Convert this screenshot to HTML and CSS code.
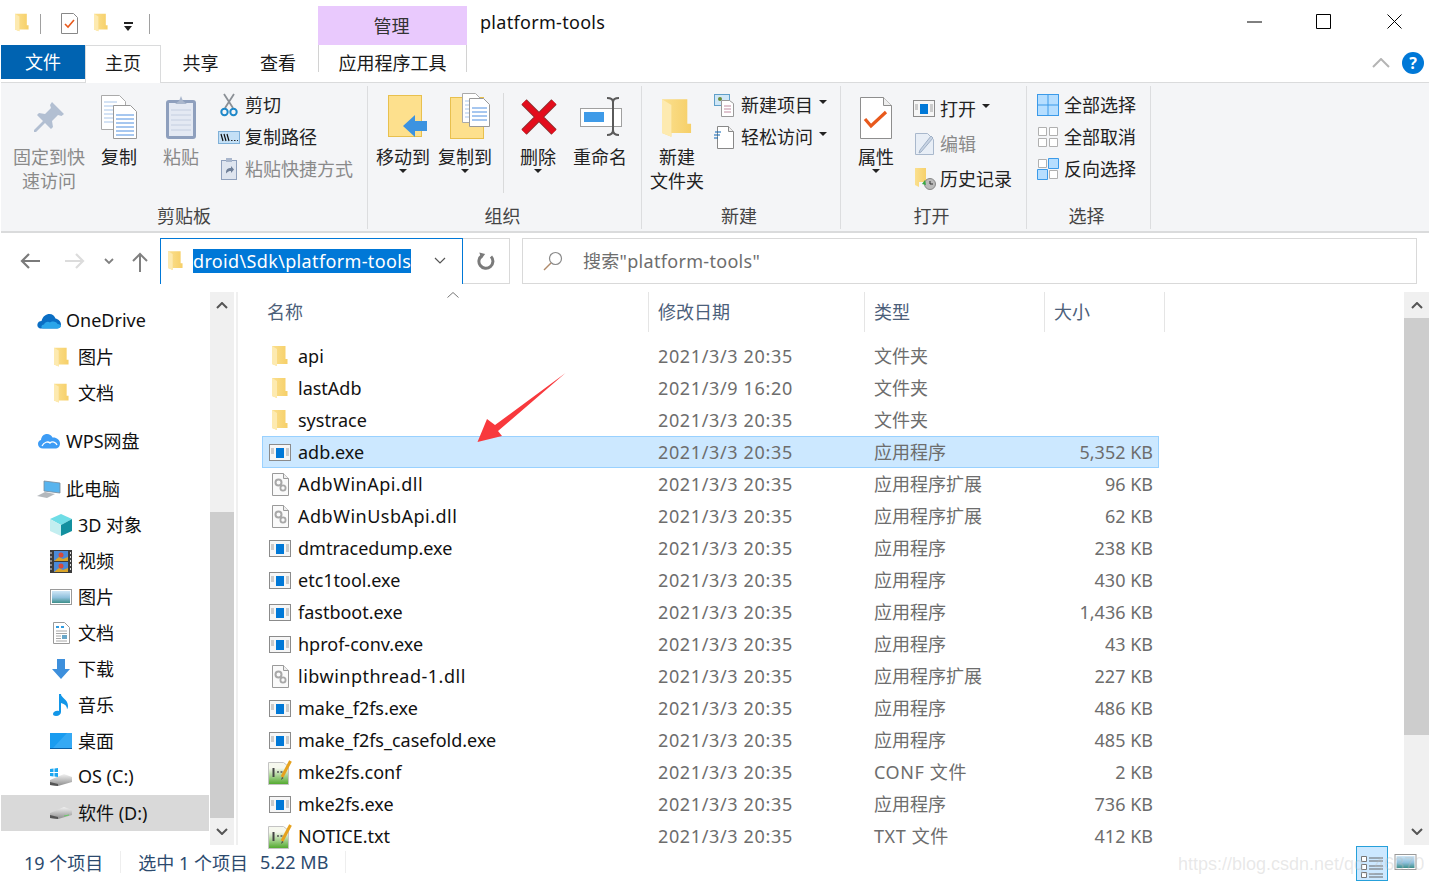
FILE: index.html
```html
<!DOCTYPE html>
<html lang="zh-CN">
<head>
  <meta charset="UTF-8">
  <title>platform-tools</title>
  <link rel="stylesheet" href="styles.css">
</head>
<body>
  <!-- shared icons -->
  <svg class="defs" aria-hidden="true">
    <defs>
      <linearGradient id="fg" x1="0" x2="1" y1="0" y2="0"><stop offset="0" stop-color="#fbe08f"/><stop offset="1" stop-color="#f6cf68"/></linearGradient>
      <linearGradient id="tg" x1="0" x2="0" y1="0" y2="1"><stop offset="0.25" stop-color="#f6f8ee"/><stop offset="1" stop-color="#4fa82a"/></linearGradient>
      <linearGradient id="dg" x1="0" x2="0" y1="0" y2="1"><stop offset="0" stop-color="#f2f2f2"/><stop offset="1" stop-color="#8d8d8d"/></linearGradient>
      <linearGradient id="sky" x1="0" x2="0" y1="0" y2="1"><stop offset="0" stop-color="#cfe6f6"/><stop offset="0.55" stop-color="#8fc0dc"/><stop offset="1" stop-color="#3d8f8a"/></linearGradient>
      <symbol id="folder" viewBox="0 0 16 20"><path d="M0 0h13.500v13h2v5H5v2l-5-2z" fill="url(#fg)"/><path d="M0 0l5 3v17l-5-2z" fill="#fdeab0"/></symbol>
      <symbol id="exe" viewBox="0 0 22 17"><rect x=".5" y=".5" width="21" height="16" fill="#f6f6f6" stroke="#8b8b8b"/><rect x="7" y="4" width="8" height="10" fill="#0078d7"/><path d="M2 5h3M2 7h3M2 9h3M17 5h3M17 7h3M17 9h3M17 11h3" stroke="#a0a0a0"/></symbol>
      <symbol id="dll" viewBox="0 0 17 23"><path d="M.5.5h11l5 5v17H.5z" fill="#fafafa" stroke="#9a9a9a"/><path d="M11.500.5v5h5" fill="#eee" stroke="#9a9a9a"/><circle cx="6.500" cy="9.500" r="3" fill="none" stroke="#a8a8a8" stroke-width="2"/><circle cx="11" cy="15" r="2.600" fill="none" stroke="#a8a8a8" stroke-width="1.800"/></symbol>
      <symbol id="txt" viewBox="0 0 24 25"><path d="M.5 2.500h15l5 4v18H.5z" fill="url(#tg)" stroke="#c4c4c4"/><path d="M5.500 8v9" stroke="#444" stroke-width="2"/><path d="M9 12h2M12.500 12h2" stroke="#555" stroke-width="1.500"/><path d="M22.500 1L14 17" stroke="#e6a21e" stroke-width="3"/><path d="M14 17l-1 3 2.500-2z" fill="#444"/></symbol>
      <symbol id="pin" viewBox="0 0 32 32"><path d="M19 1l12 12-2.500 2-3.500-1-6 6 1 6-2 2-6-6-9 9H1v-2l9-9-6-6 2-2 6 1 6-6-1-3z" fill="#b2bfd2"/></symbol>
      <symbol id="copy" viewBox="0 0 36 44"><path d="M.5.500h18l6 6v28H.5z" fill="#fff" stroke="#aaa"/><path d="M3 7h13M3 11h18M3 15h18M3 19h18M3 23h18M3 27h18" stroke="#a9c6ea"/><path d="M12.500 10.500h17l6 6v27h-23z" fill="#fff" stroke="#999"/><path d="M15 20h18M15 24h18M15 28h18M15 32h18M15 36h18M15 40h18" stroke="#4f8fe0"/></symbol>
      <symbol id="paste" viewBox="0 0 32 44"><rect x="1" y="5" width="30" height="39" rx="3" fill="#8e9fbd"/><rect x="4" y="8" width="24" height="33" fill="#e4e9f3"/><path d="M6 15h20M6 20h20M6 25h20M6 30h20M6 35h20" stroke="#c4cee0"/><path d="M10 9l4-3 2-5 2 5 4 3z" fill="#aab7cd"/></symbol>
      <symbol id="scissors" viewBox="0 0 18 24"><path d="M4 1l9 14M14 1L5 15" stroke="#8b9096" stroke-width="1.800" fill="none"/><circle cx="4.500" cy="19" r="3.200" fill="none" stroke="#1e88c9" stroke-width="2"/><circle cx="13.500" cy="19" r="3.200" fill="none" stroke="#1e88c9" stroke-width="2"/></symbol>
      <symbol id="path" viewBox="0 0 22 13"><rect x=".5" y=".5" width="21" height="12" fill="#c4e0f6" stroke="#7fb0d8"/><path d="M3 3l2 7M6 3l2 7M9 3l2 7" stroke="#111" stroke-width="1.200"/><path d="M13 9.500h1.500M16 9.500h1.500M19 9.500h1" stroke="#222"/></symbol>
      <symbol id="shortcut" viewBox="0 0 16 22"><rect x=".5" y="2.500" width="15" height="19" fill="#dfe5ef" stroke="#8fa0bc"/><rect x="5" y="0" width="6" height="4" fill="#a9b6cc"/><path d="M5 15c0-4 2-5 5-5V8l3 3.500-3 3.500v-2c-2 0-3 .500-5 2.500z" fill="#6f7f98"/></symbol>
      <symbol id="move" viewBox="0 0 40 44"><rect x=".5" y=".5" width="33" height="41" fill="#fde08d" stroke="#e8c04e"/><path d="M15 31l12-11v6h12v10H27v6z" fill="#3c93e0"/></symbol>
      <symbol id="copyto" viewBox="0 0 40 46"><rect x=".5" y="4.500" width="33" height="41" fill="#fde08d" stroke="#e8c04e"/><path d="M12.500.5h13l5 5v24h-18z" fill="#fff" stroke="#aaa"/><path d="M15 8h13M15 12h13M15 16h13M15 20h13M15 24h13" stroke="#a9c6ea"/><path d="M19.500 5.500h14l6 6v22h-20z" fill="#fff" stroke="#999"/><path d="M22 15h15M22 19h15M22 23h15M22 27h15" stroke="#4f8fe0"/></symbol>
      <symbol id="del" viewBox="0 0 38 38"><path d="M4 4l30 30M34 4L4 34" stroke="#8a3030" stroke-width="7.500"/><path d="M4 4l30 30M34 4L4 34" stroke="#e30d1c" stroke-width="6"/></symbol>
      <symbol id="rename" viewBox="0 0 42 39"><rect x=".5" y="11.500" width="41" height="18" fill="#fff" stroke="#a0a0a0"/><rect x="4" y="15" width="20" height="10" fill="#3f9be8"/><path d="M27 1c4 0 6 1 6 4v28c0 3-2 5-6 5M39 1c-4 0-6 1-6 4v28c0 3 2 5 6 5" fill="none" stroke="#5a5a5a" stroke-width="2"/></symbol>
      <symbol id="newitem" viewBox="0 0 22 23"><rect x=".5" y=".5" width="15" height="11" fill="#cfe6f6" stroke="#5f9fc9"/><circle cx="6" cy="5" r="2" fill="#6b8e3a"/><path d="M7.500 6.500h8l4 3v13h-12z" fill="#fff" stroke="#999"/><path d="M10 12h7M10 15h7M10 18h7" stroke="#c08aa0"/></symbol>
      <symbol id="easy" viewBox="0 0 20 23"><path d="M3.500 .5h11l5 5v17h-16z" fill="#fff" stroke="#888"/><path d="M14.500.5v5h5" fill="#eee" stroke="#888"/><path d="M1 6h6M0 9h6M0 12h4" stroke="#0a64b4" stroke-width="1.200"/></symbol>
      <symbol id="props" viewBox="0 0 32 42"><path d="M.5.500h23l8 8v33H.5z" fill="#fff" stroke="#8e8e8e"/><path d="M23.500.5v8h8" fill="#eee" stroke="#8e8e8e"/><path d="M5 22l6 7L26 15" fill="none" stroke="#e8591c" stroke-width="3.200"/></symbol>
      <symbol id="edit" viewBox="0 0 20 22"><path d="M.5.500h12l6 6v15H.5z" fill="#e8eef6" stroke="#a9b8cc"/><path d="M18 5L6 19l-2 1 1-3L16 3z" fill="#c8d4e4" stroke="#9fb0c6"/></symbol>
      <symbol id="history" viewBox="0 0 22 22"><path d="M0 0h11v11h1v3H4v5l-4-2z" fill="url(#fg)"/><circle cx="15" cy="16" r="5.500" fill="#bbb" stroke="#888"/><path d="M15 13v3h3" stroke="#333" fill="none"/><path d="M11 17l-4-1 3-4z" fill="#39a845"/></symbol>
      <symbol id="selall" viewBox="0 0 22 22"><rect x=".5" y=".5" width="21" height="21" fill="#b6deff" stroke="#3b9ae9"/><path d="M11 0v22M0 11h22" stroke="#3b9ae9"/></symbol>
      <symbol id="selnone" viewBox="0 0 22 22"><path d="M1.500 1.500h8v8h-8zM12.500 1.500h8v8h-8zM1.500 12.500h8v8h-8zM12.500 12.500h8v8h-8z" fill="#fff" stroke="#b0b0b0"/></symbol>
      <symbol id="selinv" viewBox="0 0 22 22"><path d="M1.500 1.500h8v8h-8zM12.500 12.500h8v8h-8z" fill="#fff" stroke="#b0b0b0"/><path d="M11.500.5h10v10h-10zM.5 11.500h10v10H.5z" fill="#b6deff" stroke="#3b9ae9"/></symbol>
      <symbol id="onedrive" viewBox="0 0 24 16"><path d="M4 15.500C1 15.500 0 13 .5 11c.5-2 2-3 4-3C6 3 9 1 12.500 1c3 0 5 2 6 4.500C21 6 24 8 24 11.500c0 2.500-2 4-4 4z" fill="#0a6ec4"/><path d="M6 15.500c-2 0-2.500-3.500 1-4 1-2.500 4-3.500 6-2 2-2 7-1 7.500 1.500 2 0 3.500 1 3.500 2 0 1.500-2 2.500-4 2.500z" fill="#2aa5ea"/></symbol>
      <symbol id="wps" viewBox="0 0 22 16"><path d="M5 15.500C2 15.500 0 13.500 0 11c0-2 1-3.500 3-4C3.500 3 6 1 9 1c2.500 0 4.500 1.500 5.500 3.500 3.500-.5 7.500 2 7.500 6 0 3-2 5-5 5z" fill="#3d9cf5"/><path d="M4 13c2-4 6-5 8-3 2-2 6-1 7 2" fill="none" stroke="#fff" stroke-width="1.300"/></symbol>
      <symbol id="pc" viewBox="0 0 24 18"><path d="M7 1l16 2v10L7 11z" fill="#58b4ee" stroke="#7a8a99" stroke-width=".8"/><path d="M0 16l8-4 10 2-8 4z" fill="#b4b8bc"/></symbol>
      <symbol id="cube" viewBox="0 0 22 22"><path d="M11 0l11 5-11 6L0 5z" fill="#6fdde6"/><path d="M0 5l11 6v11L0 17z" fill="#c3eef0"/><path d="M22 5l-11 6v11l11-5z" fill="#12909f"/></symbol>
      <symbol id="video" viewBox="0 0 22 23"><rect width="22" height="23" fill="#3c3c3c"/><rect x="4" y="1" width="14" height="10" fill="#4a8ad8"/><rect x="4" y="12" width="14" height="10" fill="#4a8ad8"/><path d="M4 11l5-4 4 2 5-2v4zM4 22l5-4 4 2 5-2v4z" fill="#d9a428"/><circle cx="11" cy="5" r="2.500" fill="#d84a3a"/><circle cx="11" cy="16" r="2.500" fill="#d84a3a"/><path d="M1 2v19M20.500 2v19" stroke="#ddd" stroke-dasharray="2 2"/></symbol>
      <symbol id="picture" viewBox="0 0 22 16"><rect x=".5" y=".5" width="21" height="15" fill="#fff" stroke="#9a9a9a"/><rect x="2" y="2" width="18" height="12" fill="url(#sky)"/></symbol>
      <symbol id="doc" viewBox="0 0 17 22"><path d="M.5.500h11l5 5v16H.5z" fill="#fff" stroke="#9a9a9a"/><path d="M3 5h3M8 5h3" stroke="#2f9be0" stroke-width="2"/><path d="M3 9h11M3 11.500h11M3 14h5M3 16.500h5M3 19h11" stroke="#a8a8a8"/><rect x="9" y="13" width="5" height="4" fill="#6aa7c8"/></symbol>
      <symbol id="down" viewBox="0 0 18 20"><path d="M5 0h8v10h5l-9 10-9-10h5z" fill="#3d8fdc"/></symbol>
      <symbol id="music" viewBox="0 0 16 22"><path d="M6 0h2c0 4 7 5 7 12 0 1-.5 3-1 3 0-3-2-5-6-6v9c0 2-2 4-5 4-2 0-3-1-3-2 0-2 3-4 6-3z" fill="#1296e8"/></symbol>
      <symbol id="desktop" viewBox="0 0 22 16"><rect width="22" height="16" fill="#1a9cf0"/><path d="M3 15L17 0h5v15z" fill="#35a9f4"/><path d="M0 15h22v1H0z" fill="#0b5fa5"/></symbol>
      <symbol id="drive" viewBox="0 0 22 12"><path d="M0 6l14-6 8 3v5L8 12 0 11z" fill="url(#dg)"/><path d="M0 8l8 2v2L0 11z" fill="#555"/><path d="M14 9l5-1" stroke="#6c6"/></symbol>
      <symbol id="osdrive" viewBox="0 0 22 18"><path d="M0 12l14-6 8 3v5L8 18l-8-1z" fill="url(#dg)"/><path d="M0 14l8 2v2l-8-1z" fill="#555"/><path d="M0 1l3.500-.5V4H0zM4.500 .4L8 0v4H4.500zM0 5h3.500v3.500L0 8zM4.500 5H8v4l-3.500-.5z" fill="#1ea7f0"/></symbol>
      <symbol id="details" viewBox="0 0 22 24"><path d="M.5 1.500h5v5h-5zM.5 9.500h5v5h-5zM.5 17.500h5v5h-5z" fill="#fff" stroke="#777"/><path d="M8 3h14M8 6h14M8 11h14M8 14h14M8 19h14M8 22h14" stroke="#666"/></symbol>
    </defs>
  </svg>

  <div class="title-bar">
    <svg class="qa-folder"><use href="#folder"/></svg>
    <span class="qa-sep"></span>
    <svg class="qa-check" viewBox="0 0 17 21"><path d="M.5 .5h12l4 4v16H.5z" fill="#fff" stroke="#888"/><path d="M4 11l3 3 6-7" fill="none" stroke="#e8591c" stroke-width="1.600"/></svg>
    <svg class="qa-folder qa-folder2"><use href="#folder"/></svg>
    <span class="qa-drop"></span>
    <span class="qa-sep qa-sep2"></span>
    <div class="manage">管理</div>
    <div class="title">platform-tools</div>
    <div class="win-btns">
      <svg viewBox="0 0 16 16"><path d="M0 8h15" stroke="#000"/></svg>
      <svg viewBox="0 0 16 16"><path d="M.5 .5h14v14H.5z" fill="none" stroke="#000"/></svg>
      <svg viewBox="0 0 16 16"><path d="M.5 .5l14 14M14.500 .5l-14 14" stroke="#000"/></svg>
    </div>
  </div>

  <div class="tabs">
    <div class="tab tab-file">文件</div>
    <div class="tab tab-home">主页</div>
    <div class="tab tab-share">共享</div>
    <div class="tab tab-view">查看</div>
    <div class="tab tab-app">应用程序工具</div>
    <svg class="collapse" viewBox="0 0 18 10"><path d="M1 9l8-8 8 8" fill="none" stroke="#b4b4b4" stroke-width="2"/></svg>
    <div class="help">?</div>
  </div>

  <div class="ribbon">
    <div class="group g-clip">
      <div class="group-body">
        <div class="big w72 off"><span class="big-icon"><svg class="ic-pin"><use href="#pin"/></svg></span>固定到快<br>速访问</div>
        <div class="big w68"><span class="big-icon"><svg class="ic-copy"><use href="#copy"/></svg></span>复制</div>
        <div class="big w56 off"><span class="big-icon"><svg class="ic-paste"><use href="#paste"/></svg></span>粘贴</div>
        <div class="small-col">
          <div class="small"><span class="small-icon"><svg class="ic-scissors"><use href="#scissors"/></svg></span>剪切</div>
          <div class="small"><span class="small-icon"><svg class="ic-path"><use href="#path"/></svg></span>复制路径</div>
          <div class="small off"><span class="small-icon"><svg class="ic-shortcut"><use href="#shortcut"/></svg></span>粘贴快捷方式</div>
        </div>
      </div>
      <div class="group-label">剪贴板</div>
    </div>

    <div class="group g-org">
      <div class="group-body">
        <div class="big w62"><span class="big-icon"><svg class="ic-move"><use href="#move"/></svg></span>移动到<i class="drop"></i></div>
        <div class="big w62"><span class="big-icon"><svg class="ic-copyto"><use href="#copyto"/></svg></span>复制到<i class="drop"></i></div>
        <span class="inner-sep"></span>
        <div class="big w60"><span class="big-icon"><svg class="ic-del"><use href="#del"/></svg></span>删除<i class="drop"></i></div>
        <div class="big w64"><span class="big-icon"><svg class="ic-rename"><use href="#rename"/></svg></span>重命名</div>
      </div>
      <div class="group-label">组织</div>
    </div>

    <div class="group g-new">
      <div class="group-body">
        <div class="big w58"><span class="big-icon"><svg class="ic-bigfolder"><use href="#folder"/></svg></span>新建<br>文件夹</div>
        <div class="small-col">
          <div class="small"><span class="small-icon"><svg class="ic-newitem"><use href="#newitem"/></svg></span>新建项目<i class="drop-r"></i></div>
          <div class="small"><span class="small-icon"><svg class="ic-easy"><use href="#easy"/></svg></span>轻松访问<i class="drop-r"></i></div>
        </div>
      </div>
      <div class="group-label">新建</div>
    </div>

    <div class="group g-open">
      <div class="group-body">
        <div class="big w58"><span class="big-icon"><svg class="ic-props"><use href="#props"/></svg></span>属性<i class="drop"></i></div>
        <div class="small-col tall">
          <div class="small"><span class="small-icon"><svg class="ic-exe"><use href="#exe"/></svg></span>打开<i class="drop-r"></i></div>
          <div class="small off"><span class="small-icon"><svg class="ic-edit"><use href="#edit"/></svg></span>编辑</div>
          <div class="small"><span class="small-icon"><svg class="ic-history"><use href="#history"/></svg></span>历史记录</div>
        </div>
      </div>
      <div class="group-label">打开</div>
    </div>

    <div class="group g-sel">
      <div class="group-body">
        <div class="small-col">
          <div class="small"><span class="small-icon"><svg class="ic-sel"><use href="#selall"/></svg></span>全部选择</div>
          <div class="small"><span class="small-icon"><svg class="ic-sel"><use href="#selnone"/></svg></span>全部取消</div>
          <div class="small"><span class="small-icon"><svg class="ic-sel"><use href="#selinv"/></svg></span>反向选择</div>
        </div>
      </div>
      <div class="group-label">选择</div>
    </div>
  </div>

  <div class="nav">
    <svg class="nav-arrow" viewBox="0 0 20 18"><path d="M20 9H2M9 2L2 9l7 7" fill="none" stroke="#7a7a7a" stroke-width="2.200"/></svg>
    <svg class="nav-arrow nav-fwd" viewBox="0 0 20 18"><path d="M0 9h18M11 2l7 7-7 7" fill="none" stroke="#dcdcdc" stroke-width="2.200"/></svg>
    <svg class="nav-hist" viewBox="0 0 10 7"><path d="M1 1l4 4 4-4" fill="none" stroke="#808080" stroke-width="1.800"/></svg>
    <svg class="nav-up" viewBox="0 0 18 20"><path d="M9 20V2M2 9l7-7 7 7" fill="none" stroke="#808080" stroke-width="2"/></svg>
    <div class="address">
      <svg class="addr-folder"><use href="#folder"/></svg>
      <span class="addr-text">droid\Sdk\platform-tools</span>
      <svg class="addr-chev" viewBox="0 0 12 7"><path d="M1 1l5 5 5-5" fill="none" stroke="#555" stroke-width="1.200"/></svg>
    </div>
    <div class="refresh">
      <svg viewBox="0 0 18 18"><path d="M5 3.500a7 7 0 1 0 9 1" fill="none" stroke="#7a7a7a" stroke-width="3"/><path d="M2 1l6 .500L5 7z" fill="#7a7a7a" transform="rotate(8 5 3)"/></svg>
    </div>
    <div class="search">
      <svg viewBox="0 0 20 20"><circle cx="12.500" cy="7.500" r="6" fill="none" stroke="#8a8a8a" stroke-width="1.200"/><path d="M8 12l-7 7" stroke="#b08a6a" stroke-width="1.400"/></svg>
      <span>搜索"platform-tools"</span>
    </div>
  </div>

  <div class="content">
    <div class="sidebar">
      <div class="side-item lvl1"><span class="side-icon"><svg class="s-24-16"><use href="#onedrive"/></svg></span>OneDrive</div>
      <div class="side-item lvl2"><span class="side-icon"><svg class="s-folder"><use href="#folder"/></svg></span>图片</div>
      <div class="side-item lvl2"><span class="side-icon"><svg class="s-folder"><use href="#folder"/></svg></span>文档</div>
      <div class="side-item lvl1 sec"><span class="side-icon"><svg class="s-22-16"><use href="#wps"/></svg></span>WPS网盘</div>
      <div class="side-item lvl1 sec"><span class="side-icon"><svg class="s-24-18"><use href="#pc"/></svg></span>此电脑</div>
      <div class="side-item lvl2"><span class="side-icon"><svg class="s-22-22"><use href="#cube"/></svg></span>3D 对象</div>
      <div class="side-item lvl2"><span class="side-icon"><svg class="s-22-23"><use href="#video"/></svg></span>视频</div>
      <div class="side-item lvl2"><span class="side-icon"><svg class="s-22-16"><use href="#picture"/></svg></span>图片</div>
      <div class="side-item lvl2"><span class="side-icon"><svg class="s-17-22"><use href="#doc"/></svg></span>文档</div>
      <div class="side-item lvl2"><span class="side-icon"><svg class="s-18-20"><use href="#down"/></svg></span>下载</div>
      <div class="side-item lvl2"><span class="side-icon"><svg class="s-16-22"><use href="#music"/></svg></span>音乐</div>
      <div class="side-item lvl2"><span class="side-icon"><svg class="s-22-16"><use href="#desktop"/></svg></span>桌面</div>
      <div class="side-item lvl2"><span class="side-icon"><svg class="s-22-18"><use href="#osdrive"/></svg></span>OS (C:)</div>
      <div class="side-item lvl2 current"><span class="side-icon"><svg class="s-22-12"><use href="#drive"/></svg></span>软件 (D:)</div>
    </div>
    <div class="scroll scroll-side">
      <svg class="sb-arrow" viewBox="0 0 12 7"><path d="M1 6l5-5 5 5" fill="none" stroke="#555" stroke-width="2"/></svg>
      <div class="sb-space sb-top-side"></div>
      <div class="sb-thumb sb-thumb-side"></div>
      <svg class="sb-arrow" viewBox="0 0 12 7"><path d="M1 1l5 5 5-5" fill="none" stroke="#555" stroke-width="2"/></svg>
    </div>

    <div class="files">
      <div class="list-head">
        <div class="hcell hname">名称</div>
        <div class="hcell">修改日期</div>
        <div class="hcell">类型</div>
        <div class="hcell">大小</div>
        <svg class="sort-arrow" viewBox="0 0 12 6"><path d="M.5 5.500L6 .5l5.500 5" fill="none" stroke="#777"/></svg>
      </div>
      <div class="rows">
        <div class="row"><div class="name"><span class="file-icon"><svg class="f-folder"><use href="#folder"/></svg></span>api</div><div class="cell date">2021/3/3 20:35</div><div class="cell">文件夹</div><div class="size"></div></div>
        <div class="row"><div class="name"><span class="file-icon"><svg class="f-folder"><use href="#folder"/></svg></span>lastAdb</div><div class="cell date">2021/3/9 16:20</div><div class="cell">文件夹</div><div class="size"></div></div>
        <div class="row"><div class="name"><span class="file-icon"><svg class="f-folder"><use href="#folder"/></svg></span>systrace</div><div class="cell date">2021/3/3 20:35</div><div class="cell">文件夹</div><div class="size"></div></div>
        <div class="row selected"><div class="name"><span class="file-icon"><svg class="f-exe"><use href="#exe"/></svg></span>adb.exe</div><div class="cell date">2021/3/3 20:35</div><div class="cell">应用程序</div><div class="size">5,352 KB</div></div>
        <div class="row"><div class="name dll-name"><span class="file-icon"><svg class="f-dll"><use href="#dll"/></svg></span>AdbWinApi.dll</div><div class="cell date">2021/3/3 20:35</div><div class="cell">应用程序扩展</div><div class="size">96 KB</div></div>
        <div class="row"><div class="name dll-name"><span class="file-icon"><svg class="f-dll"><use href="#dll"/></svg></span>AdbWinUsbApi.dll</div><div class="cell date">2021/3/3 20:35</div><div class="cell">应用程序扩展</div><div class="size">62 KB</div></div>
        <div class="row"><div class="name"><span class="file-icon"><svg class="f-exe"><use href="#exe"/></svg></span>dmtracedump.exe</div><div class="cell date">2021/3/3 20:35</div><div class="cell">应用程序</div><div class="size">238 KB</div></div>
        <div class="row"><div class="name"><span class="file-icon"><svg class="f-exe"><use href="#exe"/></svg></span>etc1tool.exe</div><div class="cell date">2021/3/3 20:35</div><div class="cell">应用程序</div><div class="size">430 KB</div></div>
        <div class="row"><div class="name"><span class="file-icon"><svg class="f-exe"><use href="#exe"/></svg></span>fastboot.exe</div><div class="cell date">2021/3/3 20:35</div><div class="cell">应用程序</div><div class="size">1,436 KB</div></div>
        <div class="row"><div class="name"><span class="file-icon"><svg class="f-exe"><use href="#exe"/></svg></span>hprof-conv.exe</div><div class="cell date">2021/3/3 20:35</div><div class="cell">应用程序</div><div class="size">43 KB</div></div>
        <div class="row"><div class="name dll-name"><span class="file-icon"><svg class="f-dll"><use href="#dll"/></svg></span>libwinpthread-1.dll</div><div class="cell date">2021/3/3 20:35</div><div class="cell">应用程序扩展</div><div class="size">227 KB</div></div>
        <div class="row"><div class="name"><span class="file-icon"><svg class="f-exe"><use href="#exe"/></svg></span>make_f2fs.exe</div><div class="cell date">2021/3/3 20:35</div><div class="cell">应用程序</div><div class="size">486 KB</div></div>
        <div class="row"><div class="name"><span class="file-icon"><svg class="f-exe"><use href="#exe"/></svg></span>make_f2fs_casefold.exe</div><div class="cell date">2021/3/3 20:35</div><div class="cell">应用程序</div><div class="size">485 KB</div></div>
        <div class="row"><div class="name"><span class="file-icon"><svg class="f-txt"><use href="#txt"/></svg></span>mke2fs.conf</div><div class="cell date">2021/3/3 20:35</div><div class="cell mixed">CONF 文件</div><div class="size">2 KB</div></div>
        <div class="row"><div class="name"><span class="file-icon"><svg class="f-exe"><use href="#exe"/></svg></span>mke2fs.exe</div><div class="cell date">2021/3/3 20:35</div><div class="cell">应用程序</div><div class="size">736 KB</div></div>
        <div class="row"><div class="name"><span class="file-icon"><svg class="f-txt"><use href="#txt"/></svg></span>NOTICE.txt</div><div class="cell date">2021/3/3 20:35</div><div class="cell mixed">TXT 文件</div><div class="size">412 KB</div></div>
      </div>
    </div>

    <div class="scroll scroll-main">
      <svg class="sb-arrow" viewBox="0 0 12 7"><path d="M1 6l5-5 5 5" fill="none" stroke="#555" stroke-width="2"/></svg>
      <div class="sb-thumb sb-thumb-main"></div>
      <div class="sb-space"></div>
      <svg class="sb-arrow" viewBox="0 0 12 7"><path d="M1 1l5 5 5-5" fill="none" stroke="#555" stroke-width="2"/></svg>
    </div>
  </div>

  <div class="status">
    <span class="st-count">19 个项目</span>
    <span class="st-sep"></span>
    <span class="st-sel">选中 1 个项目</span>
    <span class="st-size">5.22 MB</span>
    <span class="st-sep"></span>
    <div class="views">
      <div class="view-btn active"><svg class="v-details"><use href="#details"/></svg></div>
      <div class="view-btn"><svg class="v-thumb"><use href="#picture"/></svg></div>
    </div>
  </div>

  <!-- annotation added on top of the screenshot -->
  <svg class="red-arrow" viewBox="0 0 90 72"><path d="M88.500 1L18 53l-8-6L.5 70 25 64l-4-5z" fill="#f8393d"/></svg>
  <div class="watermark">https://blog.csdn.net/qq_46370</div>
</body>
</html>
```

FILE: styles.css
```css
* {
  box-sizing: border-box;
}
html, body {
  height: 100%;
}
body {
  margin: 0;
  padding: 0 1px;
  background: #fff;
  color: #1a1a1a;
  font-family: 'Noto Sans', 'Noto Sans CJK SC', sans-serif;
  font-size: 18px;
  overflow: hidden;
  position: relative;
}
svg {
  display: block;
  flex: none;
}
.defs {
  position: absolute;
  width: 0;
  height: 0;
}

/* title bar */
.title-bar {
  height: 45px;
  display: flex;
  align-items: flex-start;
}
.qa-folder {
  width: 14px;
  height: 21px;
  margin: 12px 0 0 14px;
}
.qa-folder2 {
  margin-left: 16px;
}
.qa-sep {
  width: 1px;
  height: 20px;
  margin: 14px 0 0 11px;
  background: #a0a0a0;
}
.qa-sep2 {
  margin-left: 16px;
}
.qa-check {
  width: 17px;
  height: 21px;
  margin: 13px 0 0 20px;
}
.qa-drop {
  width: 9px;
  height: 8px;
  margin: 22px 0 0 16px;
  border-top: 2px solid #222;
  position: relative;
}
.qa-drop::after {
  content: "";
  position: absolute;
  left: 0;
  top: 2px;
  border: 4.5px solid transparent;
  border-top: 5px solid #222;
  border-bottom: 0;
}
.manage {
  width: 149px;
  height: 39px;
  margin: 6px 0 0 168px;
  padding-right: 2px;
  background: #e9c9fd;
  text-align: center;
  line-height: 41px;
  color: #333;
}
.title {
  margin: 6px 0 0 13px;
  line-height: 33px;
  color: #111;
  letter-spacing: 0.3px;
}
.win-btns {
  margin-left: auto;
  margin-right: 26px;
  display: flex;
  gap: 53px;
  padding-top: 14px;
}
.win-btns svg {
  width: 16px;
  height: 16px;
}
.win-btns svg:last-child {
  margin-left: 2px;
}

/* tabs */
.tabs {
  height: 38px;
  display: flex;
  align-items: flex-start;
  border-bottom: 1px solid #dadbdc;
  position: relative;
}
.tab {
  height: 37px;
  text-align: center;
  line-height: 37px;
}
.tab-file {
  width: 84px;
  height: 34px;
  line-height: 34px;
  background: #0063b1;
  color: #fff;
}
.tab-home {
  width: 76px;
  height: 38px;
  line-height: 35px;
  background: #fff;
  border: 1px solid #dadbdc;
  border-bottom: 0;
  position: relative;
  z-index: 1;
}
.tab-share {
  width: 79px;
}
.tab-view {
  width: 76px;
}
.tab-app {
  width: 149px;
  height: 27px;
  margin-left: 2px;
  line-height: 37px;
  overflow: visible;
  border-left: 1px solid #d2d2d2;
  border-right: 1px solid #d2d2d2;
}
.collapse {
  width: 18px;
  height: 10px;
  margin: 13px 0 0 905px;
}
.help {
  width: 22px;
  height: 22px;
  margin: 7px 0 0 12px;
  border-radius: 50%;
  background: #0078d7;
  color: #fff;
  font-size: 16px;
  font-weight: 700;
  line-height: 22px;
  text-align: center;
}

/* ribbon */
.ribbon {
  height: 150px;
  display: flex;
  background: #f4f5f7;
  border-bottom: 2px solid #dadbdc;
  padding-top: 3px;
  color: #222;
}
.group {
  height: 143px;
  display: flex;
  flex-direction: column;
  border-right: 1px solid #dcdddf;
}
.g-clip {
  width: 367px;
}
.g-clip .group-body {
  padding-left: 12px;
}
.g-org {
  width: 274px;
}
.g-org .group-body {
  padding-left: 4px;
}
.g-new {
  width: 199px;
}
.g-new .group-body {
  padding-left: 6px;
}
.g-open {
  width: 186px;
}
.g-open .group-body {
  padding-left: 6px;
}
.g-sel {
  width: 124px;
}
.g-sel .group-body {
  padding-left: 10px;
}
.group-body {
  flex: 1;
  display: flex;
  min-height: 0;
}
.group-label {
  line-height: 24px;
  margin-bottom: 1px;
  padding-right: 4px;
  text-align: center;
  color: #444;
}
.g-clip .group-label {
  padding-right: 0;
}
.big {
  padding-top: 7px;
  line-height: 24px;
  text-align: center;
  white-space: nowrap;
  position: relative;
}
.big-icon {
  height: 52px;
  padding-bottom: 6px;
  display: flex;
  justify-content: center;
  align-items: flex-end;
}
.w72 { width: 72px; }
.w68 { width: 68px; }
.w64 { width: 64px; }
.w62 { width: 62px; }
.w60 { width: 60px; }
.w58 { width: 58px; }
.w56 { width: 56px; }
.off {
  color: #8a8a8a;
}
.drop {
  position: absolute;
  left: 50%;
  top: 83px;
  margin-left: -4px;
  border: 4px solid transparent;
  border-top: 4px solid #222;
  border-bottom: 0;
}
.drop-r {
  display: inline-block;
  margin: 0 0 4px 6px;
  border: 4px solid transparent;
  border-top: 4px solid #222;
  border-bottom: 0;
}
.inner-sep {
  width: 1px;
  height: 100px;
  margin: 7px 4px 0 7px;
  background: #d9dadb;
}
.small-col {
  margin: 3px 0 0 9px;
}
.g-new .small-col,
.g-open .small-col {
  margin-left: 8px;
}
.g-sel .small-col {
  margin-left: 0;
}
.small {
  height: 32px;
  padding-bottom: 2px;
  display: flex;
  align-items: center;
  white-space: nowrap;
}
.tall {
  margin-top: 5px;
}
.tall .small {
  height: 35px;
}
.small-icon {
  width: 27px;
  margin-top: 2px;
  display: flex;
  justify-content: flex-start;
}

/* ribbon icon sizes */
.ic-pin { width: 32px; height: 32px; margin-bottom: 6px; }
.ic-copy { width: 36px; height: 44px; }
.ic-paste { width: 32px; height: 44px; }
.ic-scissors { width: 18px; height: 24px; margin-left: 2px; }
.ic-path { width: 22px; height: 13px; }
.ic-shortcut { width: 16px; height: 22px; margin-left: 3px; }
.ic-move { width: 40px; height: 44px; margin-left: 10px; }
.ic-copyto { width: 40px; height: 46px; margin-left: 10px; }
.ic-del { width: 38px; height: 38px; margin: 0 0 3px 1px; }
.ic-rename { width: 42px; height: 39px; margin: 0 0 3px 1px; }
.ic-bigfolder { width: 30px; height: 42px; }
.ic-newitem { width: 22px; height: 23px; }
.ic-easy { width: 20px; height: 23px; }
.ic-props { width: 32px; height: 42px; }
.ic-exe { width: 22px; height: 17px; }
.ic-edit { width: 20px; height: 22px; margin-left: 2px; }
.ic-history { width: 22px; height: 22px; margin-left: 2px; }
.ic-sel { width: 22px; height: 22px; }

/* address row */
.nav {
  height: 59px;
  padding-top: 5px;
  display: flex;
  align-items: flex-start;
}
.nav-arrow {
  width: 20px;
  height: 18px;
  margin: 14px 0 0 19px;
}
.nav-fwd {
  margin-left: 25px;
}
.nav-hist {
  width: 10px;
  height: 7px;
  margin: 20px 0 0 19px;
}
.nav-up {
  width: 18px;
  height: 20px;
  margin: 14px 0 0 17px;
}
.address {
  width: 303px;
  height: 46px;
  margin-left: 11px;
  padding-bottom: 2px;
  border: 1.5px solid #0078d7;
  border-bottom: 0;
  display: flex;
  align-items: center;
}
.addr-folder {
  width: 15px;
  height: 21px;
  margin-left: 7px;
}
.addr-text {
  margin-left: 10px;
  background: #0078d7;
  color: #fff;
  line-height: 24px;
  letter-spacing: 0.35px;
  white-space: nowrap;
}
.addr-chev {
  width: 12px;
  height: 7px;
  margin-left: auto;
  margin-right: 16px;
}
.refresh {
  width: 47px;
  height: 46px;
  border: 1px solid #d9d9d9;
  border-left: 0;
  display: flex;
  align-items: center;
  justify-content: center;
}
.refresh svg {
  width: 18px;
  height: 18px;
}
.search {
  flex: 1;
  height: 46px;
  margin: 0 12px;
  padding-bottom: 2px;
  border: 1px solid #d9d9d9;
  display: flex;
  align-items: center;
  color: #6d6d6d;
  letter-spacing: 0.3px;
}
.search svg {
  width: 20px;
  height: 20px;
  margin: 2px 20px 0 20px;
}

/* main area */
.content {
  height: 553px;
  display: flex;
}
.sidebar {
  width: 209px;
  padding-top: 11px;
  color: #111;
  flex: none;
}
.side-item {
  height: 36px;
  padding-bottom: 2px;
  display: flex;
  align-items: center;
  white-space: nowrap;
}
.side-item.sec {
  margin-top: 12px;
}
.lvl1 {
  padding-left: 36px;
}
.lvl2 {
  padding-left: 48px;
}
.side-icon {
  width: 29px;
  margin-top: 2px;
  display: flex;
  justify-content: center;
  padding-right: 5px;
}
.current {
  margin-right: 1px;
  background: #d9d9d9;
}
.s-24-16 { width: 24px; height: 16px; }
.s-22-16 { width: 22px; height: 16px; }
.s-24-18 { width: 24px; height: 18px; }
.s-22-22 { width: 22px; height: 22px; }
.s-22-23 { width: 22px; height: 23px; }
.s-17-22 { width: 17px; height: 22px; }
.s-18-20 { width: 18px; height: 20px; }
.s-16-22 { width: 16px; height: 22px; }
.s-22-18 { width: 22px; height: 18px; }
.s-22-12 { width: 22px; height: 12px; }
.s-folder { width: 15px; height: 20px; }

.scroll {
  width: 25px;
  background: #f0f0f0;
  display: flex;
  flex-direction: column;
  flex: none;
}
.scroll-side {
  width: 24px;
}
.sb-arrow {
  width: 12px;
  height: 7px;
  margin: 10px auto;
  flex: none;
}
.sb-space {
  flex: 1;
}
.sb-top-side {
  flex: 0 0 193px;
}
.sb-thumb {
  background: #cdcdcd;
  flex: none;
}
.sb-thumb-side {
  flex: 1;
}
.sb-thumb-main {
  height: 417px;
  margin-top: -1px;
}
.files {
  flex: 1;
  min-width: 0;
  margin-left: 2px;
  border-left: 2px solid #f0f0f0;
  padding-left: 24px;
}
.list-head,
.row {
  display: grid;
  grid-template-columns: 387px 216px 180px 114px;
}
.list-head {
  height: 40px;
  margin-bottom: 8px;
  width: 903px;
  grid-template-columns: 387px 216px 180px 120px;
  position: relative;
  color: #4c607a;
}
.hcell {
  padding-left: 9px;
  line-height: 40px;
  border-right: 1px solid #e5e5e5;
}
.hname {
  padding-left: 5px;
}
.sort-arrow {
  position: absolute;
  left: 185px;
  top: 0;
  width: 12px;
  height: 6px;
}
.row {
  height: 32px;
  line-height: 22px;
  width: 897px;
  color: #6d6d6d;
  white-space: nowrap;
  align-items: center;
}
.row.selected {
  background: #cce8ff;
  outline: 1px solid #99d1ff;
  outline-offset: -1px;
}
.name {
  display: flex;
  align-items: center;
  color: #111;
}
.dll-name {
  letter-spacing: 0.5px;
}
.file-icon {
  width: 36px;
  display: flex;
  justify-content: center;
}
.cell {
  padding-left: 9px;
}
.date {
  letter-spacing: 0.64px;
}
.mixed {
  letter-spacing: 0.6px;
}
.size {
  text-align: right;
  padding-right: 6px;
}
.f-folder { width: 16px; height: 20px; }
.f-exe { width: 22px; height: 17px; }
.f-dll { width: 17px; height: 23px; }
.f-txt { width: 24px; height: 25px; }

/* status bar */
.status {
  height: 37px;
  display: flex;
  align-items: center;
  color: #2c4a6e;
  padding-left: 23px;
  white-space: nowrap;
}
.st-count,
.st-sel,
.st-size {
  position: relative;
  top: -2px;
}
.st-sep {
  width: 1px;
  height: 22px;
  background: #eee;
  margin: 0 0 4px 17px;
}
.st-sel {
  margin-left: 17px;
}
.st-size {
  margin-left: 12px;
}
.views {
  margin-left: auto;
  margin-right: 12px;
  display: flex;
  gap: 5px;
  align-items: flex-start;
}
.view-btn {
  width: 32px;
  height: 35px;
  padding-top: 8px;
  display: flex;
  justify-content: center;
}
.view-btn.active {
  background: #cce8ff;
  border: 1px solid #26a0da;
}
.view-btn + .view-btn {
  width: 24px;
}
.v-details {
  width: 22px;
  height: 24px;
}
.v-thumb {
  width: 23px;
  height: 16px;
}

/* overlays from the screenshot */
.red-arrow {
  position: absolute;
  left: 477px;
  top: 372px;
  width: 90px;
  height: 72px;
}
.watermark {
  position: absolute;
  left: 1178px;
  top: 852px;
  font-family: 'Liberation Sans', sans-serif;
  font-size: 18px;
  line-height: 24px;
  color: rgba(190, 190, 190, 0.35);
  white-space: nowrap;
}
```
